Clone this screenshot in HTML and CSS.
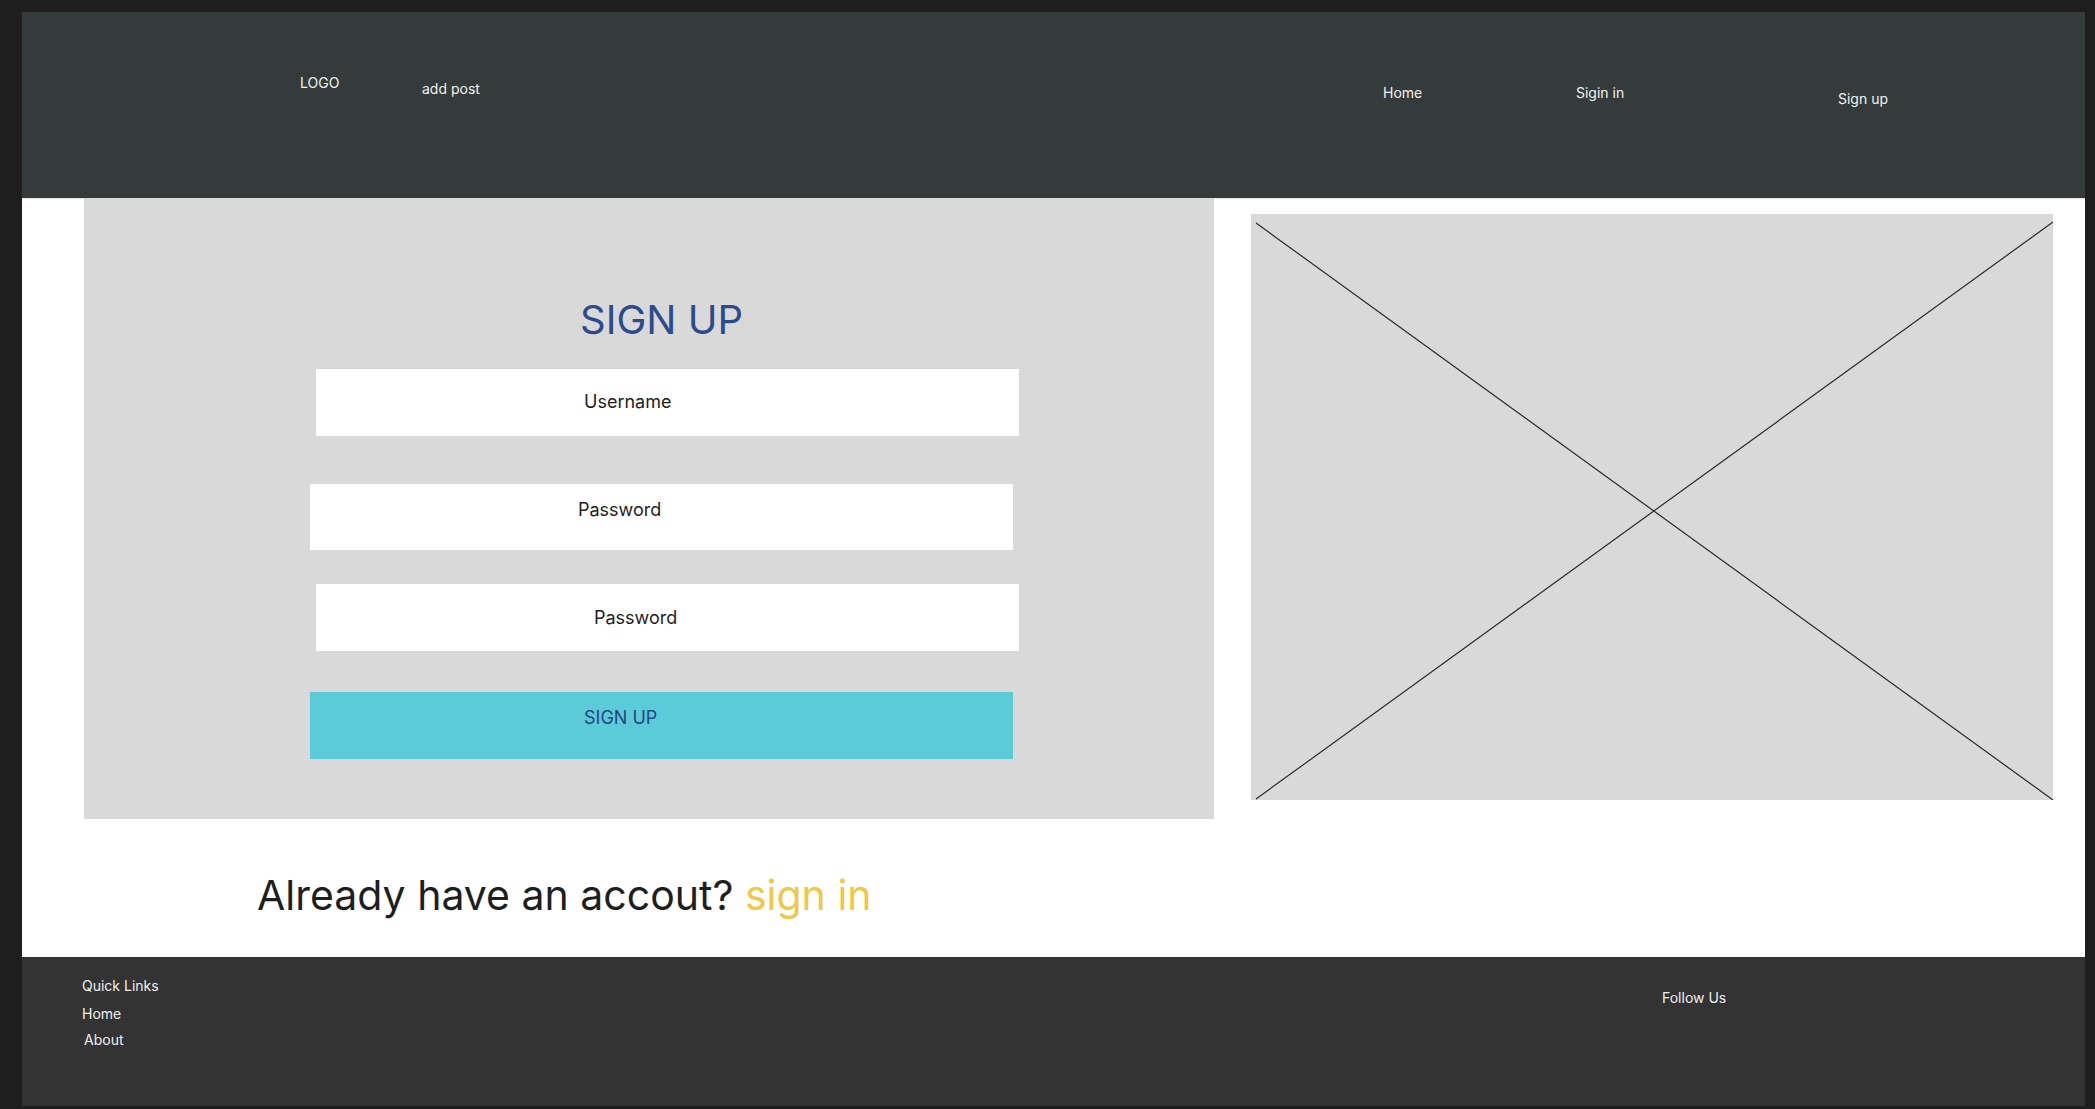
FILE: index.html
```html
<!DOCTYPE html>
<html lang="en">
<head>
<meta charset="utf-8">
<title>Sign up</title>
<link rel="stylesheet" href="styles.css">
</head>
<body>
<div class="frame">
  <header class="topbar">
    <div class="nav-item logo">LOGO</div>
    <div class="nav-item add-post">add post</div>
    <div class="nav-item home">Home</div>
    <div class="nav-item signin">Sigin in</div>
    <div class="nav-item signup">Sign up</div>
  </header>

  <main class="main">
    <div class="row">
      <section class="panel">
        <div class="form">
          <h1 class="title">SIGN UP</h1>
          <div class="field field-user">Username</div>
          <div class="field field-pass1">Password</div>
          <div class="field field-pass2">Password</div>
          <div class="btn">SIGN UP</div>
        </div>
      </section>
      <div class="placeholder">
        <svg class="ph-svg" viewBox="0 0 802 586" preserveAspectRatio="none">
          <line x1="5" y1="9" x2="802" y2="586" stroke="#2a2a2a" stroke-width="1.2"/>
          <line x1="802" y1="8" x2="5" y2="585" stroke="#2a2a2a" stroke-width="1.2"/>
        </svg>
      </div>
    </div>
    <p class="already">Already have an accout? <span class="link">sign in</span></p>
  </main>

  <footer class="footer">
    <div class="f-col">
      <div class="f-head">Quick Links</div>
      <div class="f-link f-home">Home</div>
      <div class="f-link f-about">About</div>
    </div>
    <div class="f-follow">Follow Us</div>
  </footer>
</div>
</body>
</html>
```

FILE: styles.css
```css
* { box-sizing: border-box; }
html, body { margin: 0; padding: 0; }
body {
  background: #1e1e1e;
  font-family: Inter, "Noto Sans", sans-serif;
  width: 2095px;
  height: 1109px;
  overflow: hidden;
}
.frame {
  margin: 12px 10px 0 22px;
  width: 2063px;
  background: #ffffff;
}

/* header */
.topbar {
  height: 186px;
  background: #343b3a;
  display: grid;
  grid-template-columns: 122px 961px 193px 262px auto;
  align-items: start;
  padding-left: 278px;
  color: #f2f2f2;
  font-size: 14px;
  line-height: 18px;
}
.nav-item { white-space: nowrap; }
.logo { padding-top: 62px; }
.add-post { padding-top: 68px; }
.home { padding-top: 72px; }
.signin { padding-top: 72px; }
.signup { padding-top: 78px; }

/* main */
.main {
  height: 759px;
  background: #ffffff;
  border-top: 1px solid #e6e6e6;
}
.row {
  display: flex;
  align-items: flex-start;
  padding-left: 62px;
  margin-top: -1px;
}
.panel {
  width: 1130px;
  height: 621px;
  background: #d9d9d9;
  flex: none;
}
.form {
  display: flex;
  flex-direction: column;
  align-items: flex-start;
  padding-left: 226px;
  padding-top: 98px;
}
.title {
  margin: 0;
  width: 703px;
  text-align: center;
  font-weight: 400;
  font-size: 40px;
  line-height: 48px;
  color: #2b4b8c;
}
.field, .btn {
  width: 703px;
  height: 67px;
  background: #ffffff;
  font-size: 18px;
  line-height: 22px;
  color: #1e1e1e;
}
.field-user { margin-top: 25px; margin-left: 6px; padding: 22px 0 0 268px; }
.field-pass1 { margin-top: 48px; height: 66px; padding: 15px 0 0 268px; }
.field-pass2 { margin-top: 34px; margin-left: 6px; padding: 23px 0 0 278px; }
.btn {
  margin-top: 41px;
  background: #5ccbd9;
  color: #24467e;
  padding: 15px 0 0 274px;
}

.placeholder {
  flex: none;
  width: 802px;
  height: 586px;
  margin-left: 37px;
  margin-top: 16px;
  background: #d9d9d9;
}
.ph-svg { display: block; width: 802px; height: 586px; }

.already {
  margin: 52px 0 0 235px;
  font-size: 41px;
  line-height: 48px;
  color: #1e1e1e;
  font-weight: 400;
}
.link { color: #f2c744; }

/* footer */
.footer {
  height: 149px;
  background: #333333;
  color: #f0f0f0;
  font-size: 14px;
  line-height: 18px;
  display: flex;
  align-items: flex-start;
  padding-left: 60px;
}
.f-col { width: 1580px; padding-top: 20px; }
.f-home { margin-top: 10px; }
.f-about { margin-top: 8px; padding-left: 2px; }
.f-follow { padding-top: 32px; }
```
